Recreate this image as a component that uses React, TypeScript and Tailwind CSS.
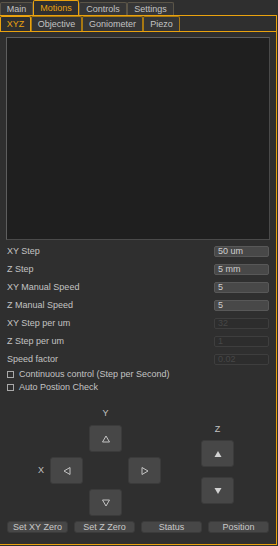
const topTabs = [
  { label: "Main", w: "w-[33px]" },
  { label: "Motions", w: "w-[46px]", active: true },
  { label: "Controls", w: "w-[48px]" },
  { label: "Settings", w: "w-[47px]" },
];

const subTabs = [
  { label: "XYZ", w: "w-[31px]", active: true },
  { label: "Objective", w: "w-[51px]" },
  { label: "Goniometer", w: "w-[61px]" },
  { label: "Piezo", w: "w-[37px]" },
];

const fields = [
  { label: "XY Step", value: "50 um" },
  { label: "Z Step", value: "5 mm" },
  { label: "XY Manual Speed", value: "5" },
  { label: "Z Manual Speed", value: "5" },
  { label: "XY Step per um", value: "32", disabled: true },
  { label: "Z Step per um", value: "1", disabled: true },
  { label: "Speed factor", value: "0.02", disabled: true },
];

// little triangle glyphs drawn as svg so the font can't colour them
const tri: Record<string, string> = {
  up: "M4 1 L7.5 7 L0.5 7 Z",
  down: "M0.5 1 L7.5 1 L4 7 Z",
  left: "M7 0.5 L7 7.5 L1 4 Z",
  right: "M1 0.5 L1 7.5 L7 4 Z",
};

function Pad({ dir, filled, className = "" }: { dir: string; filled?: boolean; className?: string }) {
  return (
    <button
      className={`w-[33px] h-[27px] rounded-[3px] bg-[#474747] border border-[#3b3b3b] flex items-center justify-center ${className}`}
    >
      <svg width="8" height="8" viewBox="0 0 8 8">
        <path
          d={tri[dir]}
          fill={filled ? "#d2d2d2" : "none"}
          stroke={filled ? "none" : "#c4c4c4"}
          strokeWidth="1"
          strokeLinejoin="round"
        />
      </svg>
    </button>
  );
}

export default function App() {
  return (
    <div className="w-[278px] h-[546px] bg-[#2f2f2f] flex flex-col font-['Liberation_Sans',Arial,sans-serif] text-[9px] leading-none text-[#c3c3c3]">
      {/* top tabs */}
      <div className="h-[15px] flex items-end">
        {topTabs.map((t) =>
          t.active ? (
            <div
              key={t.label}
              className={`${t.w} h-[15px] border border-b-0 border-[#e9a20f] rounded-t-[2px] bg-[#2f2f2f] text-[#e9a20f] flex items-center justify-center`}
            >
              {t.label}
            </div>
          ) : (
            <div
              key={t.label}
              className={`${t.w} h-[13px] border border-b-0 border-[#5b5548] rounded-t-[2px] bg-[#363636] flex items-center justify-center`}
            >
              {t.label}
            </div>
          )
        )}
      </div>

      {/* outer pane */}
      <div className="w-[277px] h-[530px] border-t border-r border-b border-[#e9a20f] flex flex-col">
        {/* sub tabs */}
        <div className="h-[15px] flex items-end">
          {subTabs.map((t) => (
            <div
              key={t.label}
              className={`${t.w} h-[15px] border border-b-0 rounded-t-[2px] flex items-center justify-center ${
                t.active
                  ? "border-[#e9a20f] text-[#e9a20f] bg-[#2f2f2f]"
                  : "border-[#a77812] bg-[#353535]"
              }`}
            >
              {t.label}
            </div>
          ))}
        </div>

        {/* inner pane */}
        <div className="flex-1 border-t border-[#e9a20f] pl-[6px] pr-[6px] pt-[5px] flex flex-col">
          <div className="h-[203px] bg-[#1f1f1f] border border-[#5e5e5e] border-b-[#4a4a4a] border-r-[#4a4a4a]" />

          <div className="mt-[6px] flex flex-col gap-[7px]">
            {fields.map((f) => (
              <div key={f.label} className="h-[11px] flex items-center justify-between pl-[1px] pr-[1px]">
                <span>{f.label}</span>
                <div
                  className={`w-[55px] h-[11px] rounded-[2px] border pl-[3px] flex items-center ${
                    f.disabled
                      ? "bg-[#2d2d2d] border-[#3e3e3e] text-[#474747]"
                      : "bg-[#484848] border-[#585858] text-[#cfcfcf]"
                  }`}
                >
                  {f.value}
                </div>
              </div>
            ))}
          </div>

          <div className="mt-[5px] flex flex-col gap-[5px] pl-[1px]">
            {["Continuous control (Step per Second)", "Auto Postion Check"].map((c) => (
              <div key={c} className="h-[8px] flex items-center gap-[5px]">
                <div className="w-[7px] h-[7px] border border-[#a9a9a9]" />
                <span>{c}</span>
              </div>
            ))}
          </div>

          {/* jog pad */}
          <div className="mt-[16px] h-[115px] flex">
            <div className="ml-[23px] grid grid-cols-[15px_33px_33px_33px] grid-rows-[13px_27px_27px_27px] gap-x-[6px] gap-y-[5px] items-center">
              <span />
              <span />
              <span className="text-center">Y</span>
              <span />

              <span />
              <span />
              <Pad dir="up" />
              <span />

              <span className="text-right">X</span>
              <Pad dir="left" />
              <span />
              <Pad dir="right" />

              <span />
              <span />
              <Pad dir="down" />
              <span />
            </div>

            <div className="ml-[40px] flex flex-col items-center pt-[18px]">
              <span className="h-[6px] mb-[9px]">Z</span>
              <Pad dir="up" filled />
              <Pad dir="down" filled className="mt-[10px]" />
            </div>
          </div>

          <div className="mt-[-1px] flex gap-[6px] pl-[1px]">
            {["Set XY Zero", "Set Z Zero", "Status", "Position"].map((b) => (
              <button
                key={b}
                className="w-[61px] h-[12px] rounded-[3px] bg-[#474747] border border-[#3b3b3b] text-[#c9c9c9] flex items-center justify-center"
              >
                {b}
              </button>
            ))}
          </div>
        </div>
      </div>
    </div>
  );
}
